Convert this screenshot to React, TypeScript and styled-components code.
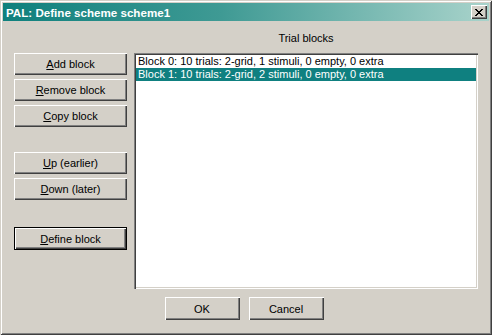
import React from "react";
import styled, { createGlobalStyle } from "styled-components";

const Global = createGlobalStyle`
  html, body { margin: 0; padding: 0; background: #d4d0c8; }
  body { font-family: "Liberation Sans", Arial, sans-serif; font-size: 11px; }
`;

const Window = styled.div`
  position: relative;
  width: 492px;
  height: 335px;
  box-sizing: border-box;
  padding: 3px;
  background: #d4d0c8;
  box-shadow: inset 1px 1px #d4d0c8, inset -1px -1px #404040, inset 2px 2px #ffffff, inset -2px -2px #808080;
  display: flex;
  flex-direction: column;
`;

const TitleBar = styled.div`
  height: 18px;
  display: flex;
  align-items: center;
  justify-content: space-between;
  padding: 0 2px 0 3px;
  background: linear-gradient(to right, #0f807d 0%, #3f9a94 45%, #a9d3cb 100%);
`;

const Title = styled.span`
  color: #fff;
  font-weight: bold;
  font-size: 11.6px;
`;

const CloseButton = styled.div`
  width: 16px;
  height: 14px;
  box-sizing: border-box;
  background: #d4d0c8;
  box-shadow: inset 1px 1px #ffffff, inset -1px -1px #404040, inset -2px -2px #808080;
  display: flex;
  align-items: center;
  justify-content: center;
`;

const Main = styled.div`
  display: grid;
  grid-template-columns: 113px 344px;
  grid-template-rows: 21px 236px;
  column-gap: 7px;
  margin: 11px 0 0 11px;
`;

const ListLabel = styled.div`
  grid-column: 2;
  grid-row: 1;
  text-align: center;
  color: #000;
  line-height: 13px;
`;

const ButtonColumn = styled.div`
  grid-column: 1;
  grid-row: 2;
  display: flex;
  flex-direction: column;
`;

const Button = styled.div<{ $gapBefore?: number; $default?: boolean; $width?: number; $height?: number }>`
  box-sizing: border-box;
  width: ${(p) => (p.$width ? `${p.$width}px` : "100%")};
  height: ${(p) => p.$height ?? 22}px;
  margin-top: ${(p) => p.$gapBefore ?? 0}px;
  background: #d4d0c8;
  color: #000;
  display: flex;
  align-items: center;
  justify-content: center;
  ${(p) =>
    p.$default
      ? `border: 1px solid #000; box-shadow: inset 1px 1px #ffffff, inset -1px -1px #404040, inset -2px -2px #808080;`
      : `box-shadow: inset 1px 1px #ffffff, inset -1px -1px #404040, inset -2px -2px #808080;`}
`;

const Key = styled.span`
  text-decoration: underline;
`;

const ListBox = styled.div`
  grid-column: 2;
  grid-row: 2;
  box-sizing: border-box;
  background: #fff;
  padding: 2px;
  box-shadow: inset 1px 1px #808080, inset 2px 2px #404040, inset -1px -1px #ffffff, inset -2px -2px #d4d0c8;
  display: flex;
  flex-direction: column;
`;

const Row = styled.div<{ $selected?: boolean }>`
  height: 13px;
  line-height: 13px;
  padding-left: 2px;
  white-space: nowrap;
  background: ${(p) => (p.$selected ? "#0f8080" : "transparent")};
  color: ${(p) => (p.$selected ? "#fff" : "#000")};
`;

const Footer = styled.div`
  display: flex;
  justify-content: center;
  gap: 9px;
  margin-top: 8px;
  padding-right: 4px;
`;

const rows = [
  "Block 0: 10 trials: 2-grid, 1 stimuli, 0 empty, 0 extra",
  "Block 1: 10 trials: 2-grid, 2 stimuli, 0 empty, 0 extra",
];

export default function App() {
  return (
    <>
      <Global />
      <Window>
        <TitleBar>
          <Title>PAL: Define scheme scheme1</Title>
          <CloseButton>
            <svg width="8" height="7" viewBox="0 0 8 7">
              <path d="M0 0h2v1h1v1h2v-1h1v-1h2v1h-1v1h-1v1h-1v1h1v1h1v1h1v1h-2v-1h-1v-1h-2v1h-1v1h-2v-1h1v-1h1v-1h1v-1h-1v-1h-1v-1h-1z" fill="#000" />
            </svg>
          </CloseButton>
        </TitleBar>
        <Main>
          <ListLabel>Trial blocks</ListLabel>
          <ButtonColumn>
            <Button><span><Key>A</Key>dd block</span></Button>
            <Button $gapBefore={4}><span><Key>R</Key>emove block</span></Button>
            <Button $gapBefore={4}><span><Key>C</Key>opy block</span></Button>
            <Button $gapBefore={25}><span><Key>U</Key>p (earlier)</span></Button>
            <Button $gapBefore={4}><span><Key>D</Key>own (later)</span></Button>
            <Button $gapBefore={27} $default $height={23}><span><Key>D</Key>efine block</span></Button>
          </ButtonColumn>
          <ListBox>
            {rows.map((r, i) => (
              <Row key={i} $selected={i === 1}>{r}</Row>
            ))}
          </ListBox>
        </Main>
        <Footer>
          <Button $width={75} $height={23}>OK</Button>
          <Button $width={75} $height={23}>Cancel</Button>
        </Footer>
      </Window>
    </>
  );
}
